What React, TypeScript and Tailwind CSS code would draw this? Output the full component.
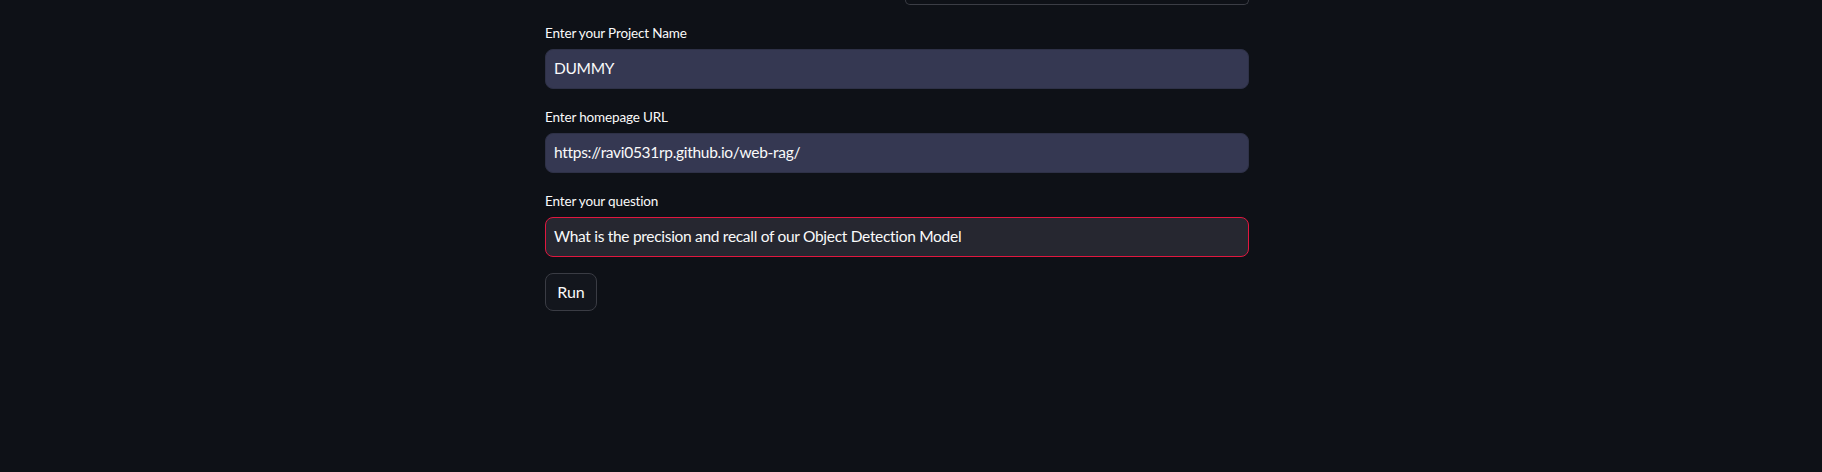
import React from "react";

const font = { fontFamily: "Lato, 'Liberation Sans', sans-serif" };

function Field({ label, value, variant }: { label: string; value: string; variant: "filled" | "error" }) {
  const box =
    variant === "filled"
      ? "bg-[#353852] border-[#2e3147]"
      : "bg-[#262730] border-[#e0173f]";
  return (
    <div className="flex flex-col">
      <div className="h-[24px] mb-1 flex items-center text-[13.5px] tracking-[-0.15px] text-[#fafafa]">{label}</div>
      <div className={`h-[40px] rounded-[8px] border flex items-center pl-[8px] text-[15.5px] tracking-[-0.3px] text-[#fafafa] ${box}`}>
        {value}
      </div>
    </div>
  );
}

export default function App() {
  return (
    <div className="min-h-[472px] w-full bg-[#0e1117] overflow-hidden" style={font}>
      <div className="ml-[545px] w-[704px] flex flex-col gap-4">
        <div className="grid grid-cols-2 gap-4">
          <div />
          <div className="h-[5px] border-x border-b border-[#3b3d45] rounded-b-[8px]" />
        </div>
        <Field label="Enter your Project Name" value="DUMMY" variant="filled" />
        <Field label="Enter homepage URL" value="https://ravi0531rp.github.io/web-rag/" variant="filled" />
        <Field
          label="Enter your question"
          value="What is the precision and recall of our Object Detection Model"
          variant="error"
        />
        <div>
          <button className="h-[38px] w-[52px] rounded-[8px] border border-[#3a3c44] bg-[#13161d] text-[16px] text-[#fafafa]">
            Run
          </button>
        </div>
      </div>
    </div>
  );
}
